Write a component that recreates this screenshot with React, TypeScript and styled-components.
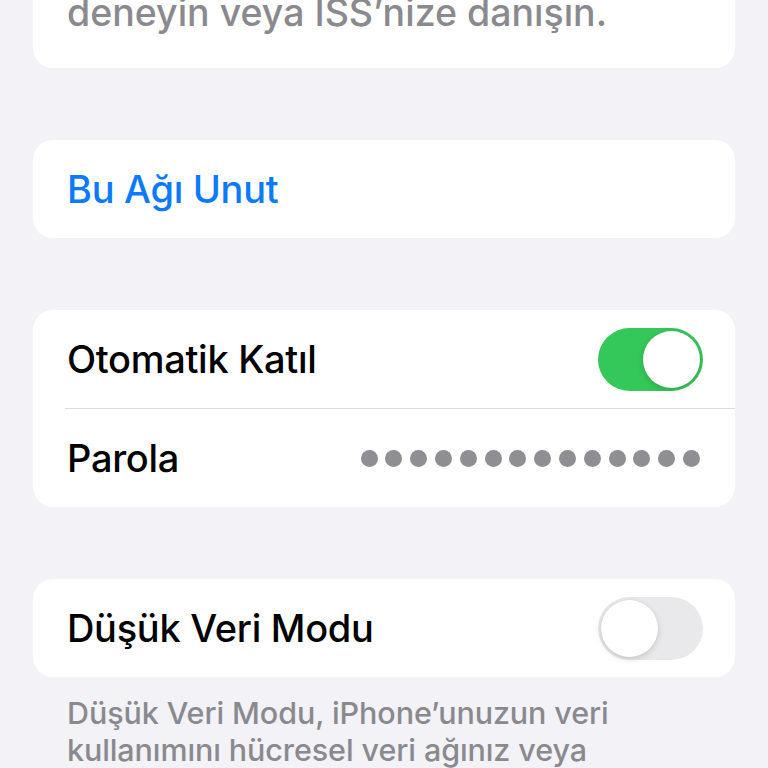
import React from 'react';
import styled, { createGlobalStyle } from 'styled-components';

const Global = createGlobalStyle`
    html, body {
        margin: 0;
        padding: 0;
        background: #f2f2f7;
        font-family: Inter, "Liberation Sans", sans-serif;
        -webkit-font-smoothing: antialiased;
    }
`;

const Page = styled.div`
    width: 768px;
    height: 768px;
    overflow: hidden;
    padding: 0 33px;
    box-sizing: border-box;
    display: flex;
    flex-direction: column;

    & > * {
        flex-shrink: 0;
    }
`;

const Card = styled.div<{ gapTop?: number; cutTop?: boolean }>`
    background: #fff;
    border-radius: ${({ cutTop }) => (cutTop ? '0 0 20px 20px' : '20px')};
    margin-top: ${({ gapTop }) => gapTop ?? 72}px;
    overflow: hidden;
`;

const NoteLine = styled.div`
    color: #8a8a8e;
    font-size: 37.5px;
    font-weight: 500;
    line-height: 46px;
    padding: 0 34px 32px;
    margin-top: -10px;
`;

const Row = styled.div`
    height: 98px;
    display: flex;
    align-items: center;
    justify-content: space-between;
    padding: 0 32px 0 34px;
    box-sizing: border-box;

    & + & {
        height: 99px;
        border-top: 1px solid #dcdce0;
        margin-left: 32px;
        padding-left: 2px;
    }
`;

const Label = styled.span<{ tone?: 'blue' }>`
    font-size: 38px;
    font-weight: 500;
    color: ${({ tone }) => (tone === 'blue' ? '#0a7aff' : '#000')};
    letter-spacing: -0.3px;
`;

const Track = styled.div<{ on?: boolean }>`
    width: 105px;
    height: 63px;
    border-radius: 32px;
    background: ${({ on }) => (on ? '#34c759' : '#e9e9eb')};
    display: flex;
    align-items: center;
    justify-content: ${({ on }) => (on ? 'flex-end' : 'flex-start')};
    padding: 3px;
    box-sizing: border-box;
`;

const Knob = styled.div`
    width: 57px;
    height: 57px;
    border-radius: 50%;
    background: #fff;
    box-shadow: 0 2px 6px rgba(0, 0, 0, 0.15), 0 0 1px rgba(0, 0, 0, 0.1);
`;

const Dots = styled.div`
    display: flex;
    gap: 7.8px;
    margin-right: 3px;
`;

const Dot = styled.span`
    width: 17px;
    height: 17px;
    border-radius: 50%;
    background: #8e8e93;
`;

const Footer = styled.p`
    margin: 17px 0 0;
    padding: 0 34px;
    max-width: 590px;
    color: #8a8a8e;
    font-size: 30.5px;
    font-weight: 500;
    line-height: 37px;
    letter-spacing: -0.1px;
`;

const Toggle = ({ on }: { on?: boolean }) => (
    <Track on={on}>
        <Knob />
    </Track>
);

export default function App() {
    return (
        <>
            <Global />
            <Page>
                <Card gapTop={0} cutTop>
                    <NoteLine>deneyin veya ISS’nize danışın.</NoteLine>
                </Card>

                <Card>
                    <Row>
                        <Label tone="blue">Bu Ağı Unut</Label>
                    </Row>
                </Card>

                <Card>
                    <Row>
                        <Label>Otomatik Katıl</Label>
                        <Toggle on />
                    </Row>
                    <Row>
                        <Label>Parola</Label>
                        <Dots>
                            {Array.from({ length: 14 }).map((_, i) => (
                                <Dot key={i} />
                            ))}
                        </Dots>
                    </Row>
                </Card>

                <Card>
                    <Row>
                        <Label>Düşük Veri Modu</Label>
                        <Toggle />
                    </Row>
                </Card>

                <Footer>
                    Düşük Veri Modu, iPhone’unuzun veri kullanımını hücresel veri ağınız veya
                    belirli Wi-Fi ağları üzerinden azaltmanıza yardımcı olur.
                </Footer>
            </Page>
        </>
    );
}
